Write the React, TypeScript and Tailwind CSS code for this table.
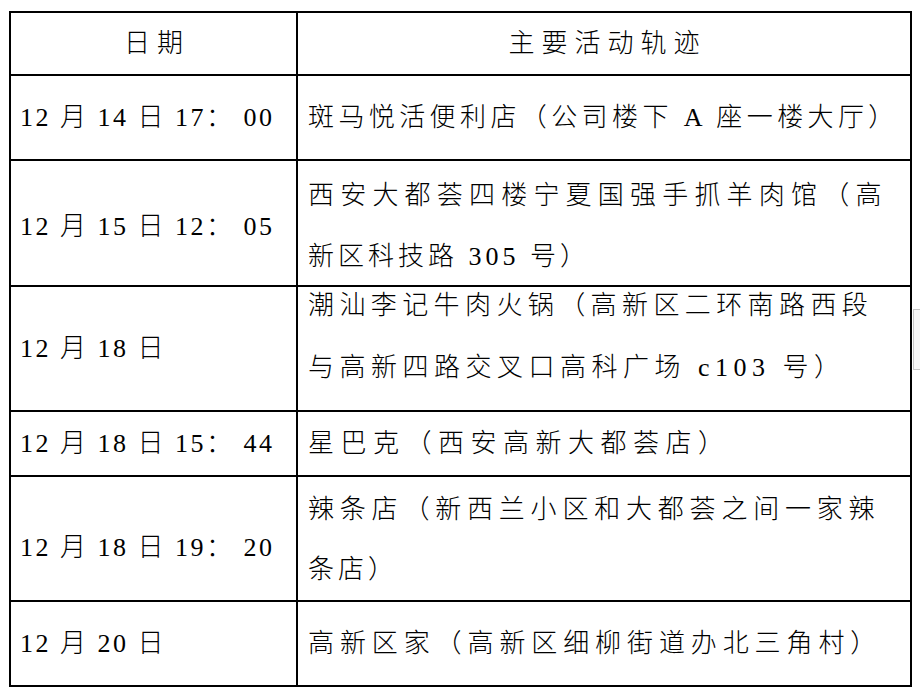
type Line = { text: string; cls: string };

type Row = {
  h: string;
  date: string;
  datePad: string;
  lines: Line[];
  bodyPad: string;
};

const rows: Row[] = [
  {
    h: 'h-[85px]',
    date: '12 月 14 日 17： 00',
    datePad: '',
    lines: [{ text: '斑马悦活便利店（公司楼下 A 座一楼大厅）', cls: 'tracking-[4.4px]' }],
    bodyPad: 'justify-center',
  },
  {
    h: 'h-[126px]',
    date: '12 月 15 日 12： 05',
    datePad: 'pt-[8px]',
    lines: [
      { text: '西安大都荟四楼宁夏国强手抓羊肉馆（高', cls: 'tracking-[6.2px]' },
      { text: '新区科技路 305 号）', cls: 'tracking-[4px]' },
    ],
    bodyPad: 'pt-[23px] gap-[37px]',
  },
  {
    h: 'h-[125px]',
    date: '12 月 18 日',
    datePad: '',
    lines: [
      { text: '潮汕李记牛肉火锅（高新区二环南路西段', cls: 'tracking-[5.4px]' },
      { text: '与高新四路交叉口高科广场 c103 号）', cls: 'tracking-[5.5px]' },
    ],
    bodyPad: 'pt-[7px] gap-[38px]',
  },
  {
    h: 'h-[65px]',
    date: '12 月 18 日 15： 44',
    datePad: '',
    lines: [{ text: '星巴克（西安高新大都荟店）', cls: 'tracking-[6.5px]' }],
    bodyPad: 'justify-center',
  },
  {
    h: 'h-[125px]',
    date: '12 月 18 日 19： 20',
    datePad: 'pt-[18px]',
    lines: [
      { text: '辣条店（新西兰小区和大都荟之间一家辣', cls: 'tracking-[5.8px]' },
      { text: '条店）', cls: 'tracking-[4px]' },
    ],
    bodyPad: 'pt-[21px] gap-[36px]',
  },
  {
    h: 'h-[85px]',
    date: '12 月 20 日',
    datePad: '',
    lines: [{ text: '高新区家（高新区细柳街道办北三角村）', cls: 'tracking-[5.9px]' }],
    bodyPad: 'justify-center',
  },
];

export default function App() {
  return (
    <div className="relative min-h-screen bg-white pt-[11px] pl-[9px] text-black font-['Liberation_Serif','Noto_Sans_CJK_SC',serif] text-[26px] font-light">
      <div className="w-[903px] border-2 border-black">
        {/* header */}
        <div className="grid h-[61px] grid-cols-[287px_1fr]">
          <div className="flex items-center justify-center border-r-2 border-black pl-[7px] leading-[30px] tracking-[7px]">
            日期
          </div>
          <div className="flex items-center justify-center pl-[7px] leading-[30px] tracking-[7px]">
            主要活动轨迹
          </div>
        </div>

        {rows.map((r) => (
          <div key={r.date + r.lines[0].text} className={`grid grid-cols-[287px_1fr] border-t-2 border-black ${r.h}`}>
            <div className={`flex items-center border-r-2 border-black pl-[9px] leading-[30px] tracking-[2.5px] whitespace-nowrap ${r.datePad}`}>
              {r.date}
            </div>
            <div className={`flex flex-col pl-[10px] whitespace-nowrap ${r.bodyPad}`}>
              {r.lines.map((l) => (
                <div key={l.text} className={`${r.lines.length > 1 ? 'leading-[24px]' : 'leading-[30px]'} ${l.cls}`}>
                  {l.text}
                </div>
              ))}
            </div>
          </div>
        ))}
      </div>

      {/* stray box edge peeking out on the right */}
      <div className="absolute left-[913px] top-[309px] h-[61px] w-[10px] border-y border-l border-[#c6c6c6] bg-[#f6f6f6]" />
    </div>
  );
}
